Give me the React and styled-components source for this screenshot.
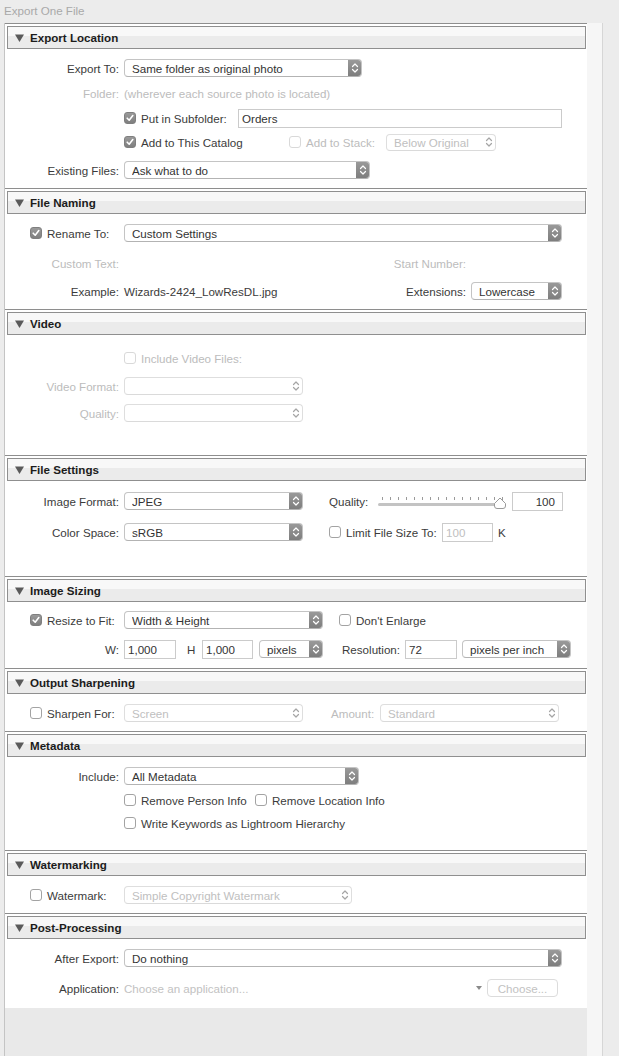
import React from "react";
import styled, { createGlobalStyle } from "styled-components";

const GlobalStyle = createGlobalStyle`
  * { box-sizing: border-box; }
  html, body {
    margin: 0;
    padding: 0;
    background: #ececec;
  }
  body {
    font-family: "Liberation Sans", Arial, sans-serif;
    font-size: 11.6px;
    color: #3b3b3b;
  }
`;

const Page = styled.div`
  width: 619px;
  min-height: 1056px;
  display: flex;
  flex-direction: column;
  background: #ececec;
`;

const WindowTitle = styled.div`
  height: 23px;
  padding-left: 4px;
  line-height: 22px;
  color: #a9a9a9;
`;

const Frame = styled.div`
  flex: 1;
  display: flex;
  padding-left: 4px;
`;

const Panel = styled.div`
  width: 583px;
  display: flex;
  flex-direction: column;
  border-left: 1px solid #c4c4c4;
  background: #e9e9e9;
`;

const Track = styled.div`
  width: 16px;
  background: #f6f6f6;
  border-right: 1px solid #d6d6d6;
`;

const SectionBox = styled.section`
  background: #fff;
  border-top: 1px solid #8e8e8e;
`;

const Header = styled.div`
  height: 23px;
  margin: 2px 1px 0 2px;
  display: flex;
  align-items: center;
  gap: 6px;
  padding-left: 7px;
  border: 1px solid #8f8f8f;
  background: linear-gradient(#f8f8f8 0 45%, #ebebeb 45% 100%);
  font-weight: bold;
  color: #1c1c1c;
`;

const Body = styled.div`
  height: ${p => p.$h}px;
  display: flex;
  flex-direction: column;
`;

const Row = styled.div`
  height: 20px;
  margin-top: ${p => p.$mt}px;
  padding-right: 25px;
  display: flex;
  align-items: center;
  flex-shrink: 0;
`;

const Label = styled.span`
  width: 114px;
  margin-right: 5px;
  flex-shrink: 0;
  text-align: right;
  white-space: nowrap;
  color: ${p => (p.$dim ? "#bcbcbc" : "#3b3b3b")};
`;

const SideLabel = styled.span`
  margin-left: auto;
  margin-right: 5px;
  white-space: nowrap;
  color: ${p => (p.$dim ? "#bcbcbc" : "#3b3b3b")};
`;

const Text = styled.span`
  margin-left: ${p => p.$ml || 0}px;
  width: ${p => (p.$w ? `${p.$w}px` : "auto")};
  flex-shrink: 0;
  white-space: nowrap;
  color: ${p => (p.$dim ? "#bcbcbc" : "#3b3b3b")};
`;

const Placeholder = styled.span`
  flex: 1;
  color: #c2c2c2;
  white-space: nowrap;
`;

const CheckCell = styled.div`
  width: 119px;
  padding-left: 25px;
  display: flex;
  align-items: center;
  gap: 5px;
  flex-shrink: 0;
  white-space: nowrap;
`;

const CheckWrap = styled.div`
  margin-left: ${p => p.$ml || 0}px;
  width: ${p => (p.$w ? `${p.$w}px` : "auto")};
  display: flex;
  align-items: center;
  gap: 5px;
  flex-shrink: 0;
  white-space: nowrap;
  color: ${p => (p.$dim ? "#bcbcbc" : "#3b3b3b")};
`;

const Box = styled.span`
  width: 12px;
  height: 12px;
  flex-shrink: 0;
  display: flex;
  align-items: center;
  justify-content: center;
  border-radius: 3px;
  border: 1px solid
    ${p => (p.$checked ? "#7f7f7f" : p.$dim ? "#d9d9d9" : "#a3a3a3")};
  background: ${p =>
    p.$checked ? "linear-gradient(#9a9a9a, #7f7f7f)" : "#fff"};
`;

const SelectBox = styled.div`
  width: ${p => p.$w}px;
  height: ${p => p.$hgt || 18}px;
  margin-left: ${p => p.$ml || 0}px;
  flex-shrink: 0;
  display: flex;
  align-items: center;
  padding-left: 7px;
  border: 1px solid ${p => (p.$dim ? "#dedede" : "#c4c4c4")};
  border-bottom-color: ${p => (p.$dim ? "#dadada" : "#b3b3b3")};
  border-radius: 4px;
  background: #fff;
  color: ${p => (p.$dim ? "#c0c0c0" : "#333")};
  overflow: hidden;
`;

const SelectValue = styled.span`
  flex: 1;
  white-space: nowrap;
  overflow: hidden;
`;

const Stepper = styled.span`
  width: 14px;
  align-self: stretch;
  margin: -1px -1px -1px 0;
  display: flex;
  align-items: center;
  justify-content: center;
  border-radius: 0 4px 4px 0;
  background: ${p =>
    p.$dim ? "transparent" : "linear-gradient(#9b9b9b, #7c7c7c)"};
`;

const Field = styled.div`
  width: ${p => p.$w}px;
  height: 19px;
  margin-left: ${p => p.$ml || 0}px;
  flex-shrink: 0;
  display: flex;
  align-items: center;
  justify-content: ${p => (p.$right ? "flex-end" : "flex-start")};
  padding: 0 ${p => (p.$right ? 7 : 3)}px 0 3px;
  border: 1px solid #cbcbcb;
  background: #fff;
  color: ${p => (p.$dim ? "#c0c0c0" : "#333")};
  white-space: nowrap;
`;

const EmptySlot = styled.div`
  width: 91px;
  flex-shrink: 0;
`;

const ChooseButton = styled.div`
  width: 71px;
  height: 18px;
  margin: 0 4px 0 5px;
  display: flex;
  align-items: center;
  justify-content: center;
  border: 1px solid #dcdcdc;
  border-radius: 4px;
  background: #fff;
  color: #c2c2c2;
`;

const Caret = styled.span`
  width: 0;
  height: 0;
  border-left: 3.5px solid transparent;
  border-right: 3.5px solid transparent;
  border-top: 4px solid #8a8a8a;
`;

const SliderSvg = styled.svg`
  flex-shrink: 0;
  display: block;
`;

const Triangle = () => (
  <svg width="9" height="8" viewBox="0 0 9 8">
    <path d="M0 0.5 H9 L4.5 8 Z" fill="#5a5a5a" />
  </svg>
);

const Check = ({ checked, dim, label, w, ml }) => (
  <CheckWrap $w={w} $ml={ml} $dim={dim}>
    <Box $checked={checked} $dim={dim}>
      {checked && (
        <svg width="10" height="10" viewBox="0 0 10 10">
          <path
            d="M2.2 5.2 L4.2 7.2 L7.8 2.6"
            fill="none"
            stroke="#fff"
            strokeWidth="1.6"
            strokeLinecap="round"
            strokeLinejoin="round"
          />
        </svg>
      )}
    </Box>
    {label}
  </CheckWrap>
);

const Select = ({ w, value, dim, ml, h }) => (
  <SelectBox $w={w} $dim={dim} $ml={ml} $hgt={h}>
    <SelectValue>{value}</SelectValue>
    <Stepper $dim={dim}>
      <svg width="8" height="12" viewBox="0 0 8 12">
        <path
          d="M1.5 4.5 L4 2 L6.5 4.5 M1.5 7.5 L4 10 L6.5 7.5"
          fill="none"
          stroke={dim ? "#a5a5a5" : "#fff"}
          strokeWidth="1.2"
          strokeLinecap="round"
          strokeLinejoin="round"
        />
      </svg>
    </Stepper>
  </SelectBox>
);

const Slider = () => {
  const ticks = [];
  for (let i = 0; i < 16; i++) ticks.push(4 + i * 8);
  return (
    <SliderSvg width="129" height="20" viewBox="0 0 129 20">
      {ticks.map(x => (
        <line key={x} x1={x + 0.5} y1="6" x2={x + 0.5} y2="9" stroke="#9a9a9a" strokeWidth="1" />
      ))}
      <line x1="1.5" y1="13.5" x2="122" y2="13.5" stroke="#c3c3c3" strokeWidth="3" strokeLinecap="round" />
      <path
        d="M122 7 L127.5 12.5 V15 Q127.5 17.5 125 17.5 H119 Q116.5 17.5 116.5 15 V12.5 Z"
        fill="#fff"
        stroke="#9a9a9a"
        strokeWidth="1"
      />
    </SliderSvg>
  );
};

const Section = ({ title, h, children }) => (
  <SectionBox>
    <Header>
      <Triangle />
      {title}
    </Header>
    <Body $h={h}>{children}</Body>
  </SectionBox>
);

export default function App() {
  return (
    <Page>
      <GlobalStyle />
      <WindowTitle>Export One File</WindowTitle>
      <Frame>
        <Panel>
          <Section title="Export Location" h={139}>
            <Row $mt={9}>
              <Label>Export To:</Label>
              <Select w={238} value="Same folder as original photo" />
            </Row>
            <Row $mt={5}>
              <Label $dim>Folder:</Label>
              <Text $dim>(wherever each source photo is located)</Text>
            </Row>
            <Row $mt={5}>
              <Label />
              <Check checked w={114} label="Put in Subfolder:" />
              <Field $w={324}>Orders</Field>
            </Row>
            <Row $mt={4}>
              <Label />
              <Check checked w={165} label="Add to This Catalog" />
              <Check dim w={97} label="Add to Stack:" />
              <Select dim w={110} h={17} value="Below Original" />
            </Row>
            <Row $mt={8}>
              <Label>Existing Files:</Label>
              <Select w={246} value="Ask what to do" />
            </Row>
          </Section>

          <Section title="File Naming" h={95}>
            <Row $mt={9}>
              <CheckCell>
                <Check checked label="Rename To:" />
              </CheckCell>
              <Select w={438} value="Custom Settings" />
            </Row>
            <Row $mt={10}>
              <Label $dim>Custom Text:</Label>
              <SideLabel $dim>Start Number:</SideLabel>
              <EmptySlot />
            </Row>
            <Row $mt={8}>
              <Label>Example:</Label>
              <Text>Wizards-2424_LowResDL.jpg</Text>
              <SideLabel>Extensions:</SideLabel>
              <Select w={91} value="Lowercase" />
            </Row>
          </Section>

          <Section title="Video" h={120}>
            <Row $mt={13}>
              <Label />
              <Check dim label="Include Video Files:" />
            </Row>
            <Row $mt={8}>
              <Label $dim>Video Format:</Label>
              <Select dim w={179} value="" />
            </Row>
            <Row $mt={7}>
              <Label $dim>Quality:</Label>
              <Select dim w={179} value="" />
            </Row>
          </Section>

          <Section title="File Settings" h={95}>
            <Row $mt={10}>
              <Label>Image Format:</Label>
              <Select w={179} value="JPEG" />
              <Text $ml={26} $w={49}>Quality:</Text>
              <Slider />
              <Field $w={51} $ml={5} $right>100</Field>
            </Row>
            <Row $mt={11}>
              <Label>Color Space:</Label>
              <Select w={179} value="sRGB" />
              <Check ml={26} w={113} label="Limit File Size To:" />
              <Field $w={51} $dim>100</Field>
              <Text $ml={5}>K</Text>
            </Row>
          </Section>

          <Section title="Image Sizing" h={66}>
            <Row $mt={8}>
              <CheckCell>
                <Check checked label="Resize to Fit:" />
              </CheckCell>
              <Select w={199} value="Width & Height" />
              <Check ml={16} label="Don't Enlarge" />
            </Row>
            <Row $mt={9}>
              <Label>W:</Label>
              <Field $w={52}>1,000</Field>
              <Text $ml={11} $w={15}>H</Text>
              <Field $w={51}>1,000</Field>
              <Select ml={6} w={64} value="pixels" />
              <Text $ml={19} $w={63}>Resolution:</Text>
              <Field $w={52}>72</Field>
              <Select ml={5} w={109} value="pixels per inch" />
            </Row>
          </Section>

          <Section title="Output Sharpening" h={37}>
            <Row $mt={9}>
              <CheckCell>
                <Check label="Sharpen For:" />
              </CheckCell>
              <Select dim w={179} value="Screen" />
              <Text $dim $ml={28} $w={49}>Amount:</Text>
              <Select dim w={179} value="Standard" />
            </Row>
          </Section>

          <Section title="Metadata" h={93}>
            <Row $mt={9}>
              <Label>Include:</Label>
              <Select w={235} value="All Metadata" />
            </Row>
            <Row $mt={4}>
              <Label />
              <Check w={131} label="Remove Person Info" />
              <Check label="Remove Location Info" />
            </Row>
            <Row $mt={3}>
              <Label />
              <Check label="Write Keywords as Lightroom Hierarchy" />
            </Row>
          </Section>

          <Section title="Watermarking" h={37}>
            <Row $mt={9}>
              <CheckCell>
                <Check label="Watermark:" />
              </CheckCell>
              <Select dim w={228} value="Simple Copyright Watermark" />
            </Row>
          </Section>

          <Section title="Post-Processing" h={69}>
            <Row $mt={9}>
              <Label>After Export:</Label>
              <Select w={438} value="Do nothing" />
            </Row>
            <Row $mt={10}>
              <Label>Application:</Label>
              <Placeholder>Choose an application...</Placeholder>
              <Caret />
              <ChooseButton>Choose...</ChooseButton>
            </Row>
          </Section>
        </Panel>
        <Track />
      </Frame>
    </Page>
  );
}
